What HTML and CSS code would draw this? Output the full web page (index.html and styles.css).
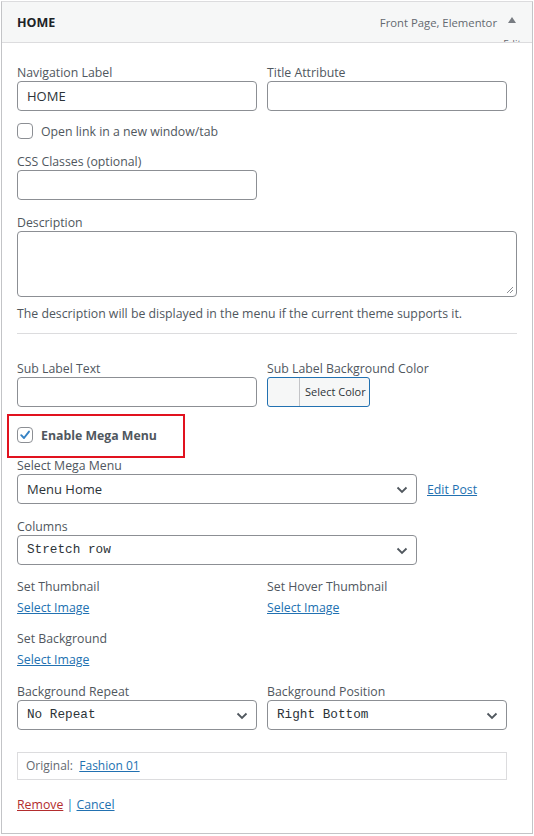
FILE: index.html
```html
<!DOCTYPE html>
<html>
<head>
<meta charset="utf-8">
<link rel="stylesheet" href="styles.css">
</head>
<body>
<div class="panel">
  <div class="head">
    <span class="title">HOME</span>
    <span class="meta">Front Page, Elementor</span>
    <span class="arrow"></span>
    <span class="edit-peek">Edit</span>
  </div>
  <div class="body">
    <div class="row2 r-nav">
      <div class="field"><div class="label">Navigation Label</div><div class="input">HOME</div></div>
      <div class="field"><div class="label">Title Attribute</div><div class="input"></div></div>
    </div>
    <div class="check r-newtab"><span class="cb"></span><span>Open link in a new window/tab</span></div>
    <div class="field r-css"><div class="label">CSS Classes (optional)</div><div class="input"></div></div>
    <div class="field r-desc"><div class="label">Description</div>
      <div class="textarea">
        <svg class="grip" width="8" height="8" viewBox="0 0 8 8"><path d="M7 1L1 7M7 4L4 7" stroke="#8c8f94" stroke-width="1" fill="none"/></svg>
      </div>
    </div>
    <div class="help">The description will be displayed in the menu if the current theme supports it.</div>
    <div class="divider"></div>
    <div class="row2 r-sub">
      <div class="field"><div class="label">Sub Label Text</div><div class="input"></div></div>
      <div class="field"><div class="label">Sub Label Background Color</div>
        <div class="color"><span class="swatch"></span><span class="ctext">Select Color</span></div>
      </div>
    </div>
    <div class="mega">
      <div class="check"><span class="cb on"><svg width="14" height="14" viewBox="0 0 14 14"><path d="M3.2 7.2L6 10L11 3.6" stroke="#3582c4" stroke-width="1.9" fill="none" stroke-linecap="round" stroke-linejoin="round"/></svg></span><span class="bold">Enable Mega Menu</span></div>
    </div>
    <div class="field r-selmega"><div class="label">Select Mega Menu</div>
      <div class="selrow">
        <div class="select w400"><span>Menu Home</span><svg class="chev" width="12" height="8" viewBox="0 0 12 8"><path d="M1.5 1.5L6 6L10.5 1.5" stroke="#50575e" stroke-width="1.8" fill="none"/></svg></div>
        <a class="link" href="#">Edit Post</a>
      </div>
    </div>
    <div class="field r-cols"><div class="label">Columns</div>
      <div class="select w400 mono"><span>Stretch row</span><svg class="chev" width="12" height="8" viewBox="0 0 12 8"><path d="M1.5 1.5L6 6L10.5 1.5" stroke="#50575e" stroke-width="1.8" fill="none"/></svg></div>
    </div>
    <div class="row2 r-thumb">
      <div class="field"><div class="label">Set Thumbnail</div><a class="link sel" href="#">Select Image</a></div>
      <div class="field"><div class="label">Set Hover Thumbnail</div><a class="link sel" href="#">Select Image</a></div>
    </div>
    <div class="field r-bg"><div class="label">Set Background</div><a class="link sel" href="#">Select Image</a></div>
    <div class="row2 r-rep">
      <div class="field"><div class="label">Background Repeat</div>
        <div class="select mono"><span>No Repeat</span><svg class="chev" width="12" height="8" viewBox="0 0 12 8"><path d="M1.5 1.5L6 6L10.5 1.5" stroke="#50575e" stroke-width="1.8" fill="none"/></svg></div>
      </div>
      <div class="field"><div class="label">Background Position</div>
        <div class="select mono"><span>Right Bottom</span><svg class="chev" width="12" height="8" viewBox="0 0 12 8"><path d="M1.5 1.5L6 6L10.5 1.5" stroke="#50575e" stroke-width="1.8" fill="none"/></svg></div>
      </div>
    </div>
    <div class="original">Original:&nbsp; <a class="link" href="#">Fashion 01</a></div>
    <div class="actions"><a class="remove" href="#">Remove</a> <span class="sep">|</span> <a class="link" href="#">Cancel</a></div>
  </div>
</div>
</body>
</html>
```
FILE: styles.css
```css
* { box-sizing: border-box; }
html, body { margin: 0; padding: 0; background: #fff; }
body {
  font-family: "Open Sans", "Noto Sans", sans-serif;
  font-size: 12.3px;
  color: #50575e;
}
.panel {
  width: 532px;
  height: 833px;
  margin: 1px 0 0 1px;
  border: 1px solid #c3c4c7;
  border-top-color: #dcdcde;
  background: #fff;
}
.head {
  position: relative;
  height: 41px;
  background: #f6f7f7;
  border-bottom: 1px solid #dcdcde;
  display: flex;
  align-items: center;
  padding: 0 0 0 15px;
}
.title { font-weight: 700; color: #1d2327; font-size: 12.5px; flex: 1; }
.meta { color: #646970; font-size: 11.3px; margin-right: 11px; }
.arrow {
  width: 0; height: 0;
  border-left: 4px solid transparent;
  border-right: 4px solid transparent;
  border-bottom: 6px solid #787c82;
  margin-right: 16px;
  margin-top: -4px;
}
.edit-peek {
  position: absolute;
  right: 11px;
  top: 36px;
  font-size: 10px;
  color: #646970;
  height: 4px;
  overflow: hidden;
  line-height: 12px;
}
.body { padding: 20px 15px 0 15px; }
.row2 { display: flex; gap: 10px; }
.row2 > .field { width: 240px; }
.label { line-height: 19px; height: 18px; color: #50575e; }
.input {
  height: 30px;
  border: 1px solid #8c8f94;
  border-radius: 4px;
  padding: 0 9px;
  line-height: 28px;
  color: #2c3338;
  font-size: 13px;
  background: #fff;
}
.r-css .input { width: 240px; }
.check { display: flex; align-items: center; gap: 8px; height: 18px; }
.cb {
  width: 16px; height: 16px;
  border: 1px solid #8c8f94;
  border-radius: 4px;
  display: flex; align-items: center; justify-content: center;
  background: #fff;
}
.r-newtab { margin-top: 11px; }
.r-css { margin-top: 12px; }
.r-desc { margin-top: 13px; }
.textarea {
  position: relative;
  height: 66px;
  border: 1px solid #8c8f94;
  border-radius: 4px;
  background: #fff;
}
.grip { position: absolute; right: 2px; bottom: 2px; }
.help { margin-top: 8px; line-height: 18px; }
.divider { margin-top: 10px; height: 1px; background: #dcdcde; }
.r-sub { margin-top: 25px; }
.color {
  display: flex;
  width: 103px;
  height: 30px;
  border: 1px solid #2271b1;
  border-radius: 3px;
  background: #f6f7f7;
  overflow: hidden;
}
.swatch { width: 32px; border-right: 1px solid #c3c4c7; }
.ctext { flex: 1; font-size: 11px; line-height: 28px; padding-left: 5px; color: #2c3338; }
.mega {
  margin: 7px 0 0 -10px;
  width: 178px;
  height: 44px;
  border: 2px solid #e1121f;
  padding: 10px 0 0 8px;
}
.bold { font-weight: 700; color: #50575e; }
.r-selmega { margin-top: -2px; }
.selrow { display: flex; align-items: center; gap: 10px; }
.select {
  position: relative;
  height: 30px;
  border: 1px solid #8c8f94;
  border-radius: 4px;
  background: #fff;
  padding: 0 24px 0 9px;
  line-height: 28px;
  color: #2c3338;
  font-size: 13px;
}
.w400 { width: 400px; }
.chev { position: absolute; right: 8px; top: 11px; }
.mono { font-family: "Liberation Mono", "DejaVu Sans Mono", monospace; font-size: 12.7px; }
.link { color: #2271b1; text-decoration: underline; }
.r-cols { margin-top: 13px; }
.r-thumb { margin-top: 12px; }
.sel { display: block; line-height: 18px; margin-top: 4px; }
.r-bg { margin-top: 12px; }
.r-rep { margin-top: 13px; }
.original {
  margin: 22px 10px 0 0;
  height: 28px;
  border: 1px solid #dcdcde;
  padding: 0 8px;
  line-height: 26px;
  font-size: 12px;
  color: #646970;
}
.actions { margin-top: 16px; line-height: 18px; }
.remove { color: #b32d2e; text-decoration: underline; }
.sep { color: #2271b1; }
```
